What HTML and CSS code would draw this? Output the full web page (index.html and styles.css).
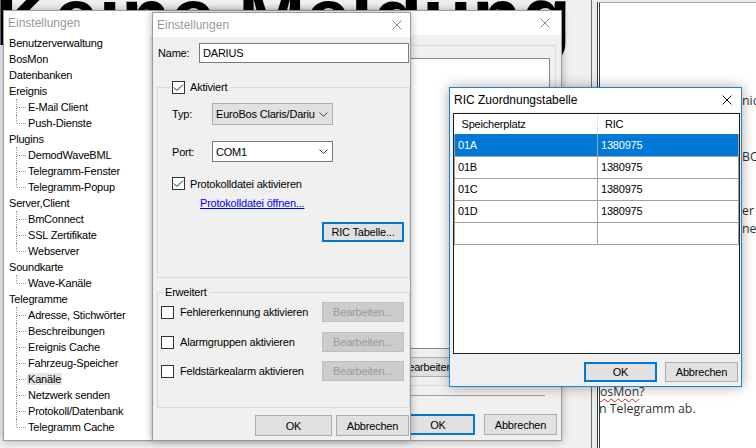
FILE: index.html
```html
<!DOCTYPE html>
<html lang="de">
<head>
    <meta charset="UTF-8">
    <title>Einstellungen</title>
    <link rel="stylesheet" href="styles.css">
</head>
<body>
<div class="desktop">
    <div class="banner">Keine Meldung</div>

    <div class="browser">
        <div class="page">
            <p class="line line-first edge">nicht</p>
            <p class="line line-bos edge">BOS</p>
            <p class="line line-er edge">er</p>
            <p class="line edge">neu</p>
            <p class="line line-bosmon"><span class="typo">BosMon</span>?</p>
            <p class="line line-tele">in Telegramm ab.</p>
        </div>
    </div>

    <!-- main settings window (behind) -->
    <div class="win win-back">
        <div class="titlebar">
            <span class="title">Einstellungen</span>
            <svg class="close" width="10" height="10" viewBox="0 0 10 10"><path d="M0.5 0.5L9.5 9.5M9.5 0.5L0.5 9.5" stroke="currentColor" stroke-width="1"/></svg>
        </div>
        <div class="back-body">
            <ul class="tree">
                <li><div class="label">Benutzerverwaltung</div></li>
                <li><div class="label">BosMon</div></li>
                <li><div class="label">Datenbanken</div></li>
                <li><div class="label">Ereignis</div>
                    <ul class="sub">
                        <li>E-Mail Client</li>
                        <li>Push-Dienste</li>
                    </ul>
                </li>
                <li><div class="label">Plugins</div>
                    <ul class="sub">
                        <li>DemodWaveBML</li>
                        <li>Telegramm-Fenster</li>
                        <li>Telegramm-Popup</li>
                    </ul>
                </li>
                <li><div class="label">Server,Client</div>
                    <ul class="sub">
                        <li>BmConnect</li>
                        <li>SSL Zertifikate</li>
                        <li>Webserver</li>
                    </ul>
                </li>
                <li><div class="label">Soundkarte</div>
                    <ul class="sub">
                        <li>Wave-Kanäle</li>
                    </ul>
                </li>
                <li><div class="label">Telegramme</div>
                    <ul class="sub">
                        <li>Adresse, Stichwörter</li>
                        <li>Beschreibungen</li>
                        <li>Ereignis Cache</li>
                        <li>Fahrzeug-Speicher</li>
                        <li><span class="sel">Kanäle</span></li>
                        <li>Netzwerk senden</li>
                        <li>Protokoll/Datenbank</li>
                        <li>Telegramm Cache</li>
                    </ul>
                </li>
            </ul>
            <div class="back-pane">
                <div class="back-group">
                    <div class="back-list"></div>
                    <button class="btn back-edit">Bearbeiten...</button>
                </div>
                <div class="back-sep"></div>
                <div class="back-buttons">
                    <button class="btn btn-default back-ok">OK</button>
                    <button class="btn back-cancel">Abbrechen</button>
                </div>
            </div>
        </div>
    </div>

    <!-- channel settings dialog -->
    <div class="win win-front">
        <div class="titlebar">
            <span class="title">Einstellungen</span>
            <svg class="close" width="10" height="10" viewBox="0 0 10 10"><path d="M0.5 0.5L9.5 9.5M9.5 0.5L0.5 9.5" stroke="currentColor" stroke-width="1"/></svg>
        </div>
        <div class="dlg-body">
            <div class="name-row">
                <span class="lbl-name">Name:</span>
                <div class="textbox">DARIUS</div>
            </div>

            <fieldset class="group group-main">
                <legend class="legend">
                    <span class="cb"><svg width="11" height="11" viewBox="0 0 11 11"><path d="M1 5.5L4 8.5L10 2.5" fill="none" stroke="#222" stroke-width="1"/></svg></span>Aktiviert
                </legend>
                <div class="field-row">
                    <span class="lbl">Typ:</span>
                    <div class="combo combo-list">EuroBos Claris/Dariu
                        <svg width="9" height="5" viewBox="0 0 9 5"><path d="M0.5 0.5L4.5 4.5L8.5 0.5" fill="none" stroke="#444"/></svg>
                    </div>
                </div>
                <div class="field-row row-port">
                    <span class="lbl">Port:</span>
                    <div class="combo combo-edit">COM1
                        <svg width="9" height="5" viewBox="0 0 9 5"><path d="M0.5 0.5L4.5 4.5L8.5 0.5" fill="none" stroke="#444"/></svg>
                    </div>
                </div>
                <div class="check-row">
                    <span class="cb"><svg width="11" height="11" viewBox="0 0 11 11"><path d="M1 5.5L4 8.5L10 2.5" fill="none" stroke="#222" stroke-width="1"/></svg></span>Protokolldatei aktivieren
                </div>
                <a class="link" href="#">Protokolldatei öffnen...</a>
                <div class="group-actions">
                    <button class="btn btn-default btn-ric">RIC Tabelle...</button>
                </div>
            </fieldset>

            <fieldset class="group group-ext">
                <legend class="legend legend-text">Erweitert</legend>
                <div class="opt-row">
                    <span class="cb"></span>
                    <span class="opt-label">Fehlererkennung aktivieren</span>
                    <button class="btn btn-off" disabled>Bearbeiten...</button>
                </div>
                <div class="opt-row">
                    <span class="cb"></span>
                    <span class="opt-label">Alarmgruppen aktivieren</span>
                    <button class="btn btn-off" disabled>Bearbeiten...</button>
                </div>
                <div class="opt-row">
                    <span class="cb"></span>
                    <span class="opt-label">Feldstärkealarm aktivieren</span>
                    <button class="btn btn-off" disabled>Bearbeiten...</button>
                </div>
            </fieldset>

            <div class="dlg-footer">
                <button class="btn btn-ok">OK</button>
                <button class="btn btn-cancel">Abbrechen</button>
            </div>
        </div>
    </div>

    <!-- RIC table dialog (active) -->
    <div class="win win-ric">
        <div class="titlebar">
            <span class="title">RIC Zuordnungstabelle</span>
            <svg class="close" width="10" height="10" viewBox="0 0 10 10"><path d="M0.5 0.5L9.5 9.5M9.5 0.5L0.5 9.5" stroke="currentColor" stroke-width="1"/></svg>
        </div>
        <div class="ric-body">
            <div class="grid">
                <table>
                    <colgroup><col class="col-a"><col class="col-b"></colgroup>
                    <thead>
                        <tr><th>Speicherplatz</th><th>RIC</th></tr>
                    </thead>
                    <tbody>
                        <tr class="selected"><td>01A</td><td>1380975</td></tr>
                        <tr><td>01B</td><td>1380975</td></tr>
                        <tr><td>01C</td><td>1380975</td></tr>
                        <tr><td>01D</td><td>1380975</td></tr>
                        <tr><td></td><td></td></tr>
                    </tbody>
                </table>
            </div>
            <div class="ric-footer">
                <button class="btn btn-default">OK</button>
                <button class="btn">Abbrechen</button>
            </div>
        </div>
    </div>
</div>
</body>
</html>
```

FILE: styles.css
```css
* {
    box-sizing: border-box;
}
body {
    margin: 0;
    width: 756px;
    height: 448px;
    overflow: hidden;
    background: #f0f0f0;
    font-family: "Liberation Sans", Arial, sans-serif;
    font-size: 11px;
    letter-spacing: -0.2px;
    color: #000;
}
.desktop {
    position: relative;
    width: 756px;
    height: 448px;
    overflow: hidden;
}

/* big status text of the app behind */
.banner {
    position: absolute;
    left: -5px;
    top: -23px;
    font-size: 81px;
    font-weight: bold;
    line-height: 1;
    letter-spacing: 0;
    white-space: nowrap;
}

/* browser on the right */
.browser {
    position: absolute;
    left: 591px;
    top: 0;
    width: 165px;
    height: 448px;
    border-left: 1px solid #6e6e6e;
    background: #e8ecf1;
    padding-left: 5px;
}
.page {
    height: 100%;
    margin-top: 2px;
    background: #fff;
    border-left: 3px double #3a3a3a;
    border-top: 1px solid #a8a8a8;
    overflow: hidden;
    font-family: "Open Sans", sans-serif;
    font-size: 12.3px;
    letter-spacing: 0;
    color: #333;
    white-space: nowrap;
}
.page .line {
    margin: 0;
    line-height: 18px;
}
.page .edge {
    padding-left: 142px;
}
.page .line-first {
    margin-top: 89px;
}
.page .line-bos {
    margin-top: 38px;
}
.page .line-er {
    margin-top: 36px;
}
.page .line-bosmon {
    margin: 145px 0 0 -8px;
    line-height: 17px;
}
.page .line-tele {
    margin-left: -4px;
    line-height: 17px;
}
.typo {
    text-decoration: underline wavy #e02020;
    text-decoration-thickness: 1px;
    text-underline-offset: 2px;
}

/* windows */
.win {
    position: absolute;
    display: flex;
    flex-direction: column;
    background: #f0f0f0;
    border: 1px solid #9a9a9a;
    box-shadow: 0 0 8px rgba(0, 0, 0, 0.3);
}
.titlebar {
    height: 24px;
    flex-shrink: 0;
    display: flex;
    align-items: center;
    justify-content: space-between;
    background: #fff;
    padding: 0 8px 0 4px;
    font-size: 12px;
    letter-spacing: 0;
    color: #999;
}
.close {
    display: block;
    color: #8a8a8a;
}

.win-back {
    left: 3px;
    top: 10px;
    width: 559px;
    height: 431px;
}
.win-back .titlebar {
    padding-right: 11px;
}
.back-body {
    flex: 1;
    display: flex;
}

/* tree */
.tree, .tree ul {
    list-style: none;
    margin: 0;
    padding: 0;
}
.tree {
    width: 146px;
    background: #fff;
    line-height: 16px;
}
.tree .label {
    padding-left: 5px;
    height: 16px;
}
.tree .sub li {
    position: relative;
    height: 16px;
    padding-left: 24px;
}
.tree .sub li::before {
    content: "";
    position: absolute;
    left: 12px;
    top: 0;
    bottom: 0;
    border-left: 1px dotted #9a9a9a;
}
.tree .sub li:last-child::before {
    bottom: 8px;
}
.tree .sub li::after {
    content: "";
    position: absolute;
    left: 13px;
    top: 8px;
    width: 9px;
    border-top: 1px dotted #9a9a9a;
}
.sel {
    background: #e5e5e5;
    padding: 0 1px;
    margin-left: -1px;
}

.back-pane {
    flex: 1;
    display: flex;
    flex-direction: column;
    padding: 10px 5px 0 6px;
}
.back-group {
    height: 341px;
    border: 1px solid #dcdcdc;
    padding: 12px 5px 0 0;
    display: flex;
    flex-direction: column;
    align-items: flex-end;
}
.back-list {
    width: 390px;
    height: 291px;
    background: #fff;
    border: 1px solid #828790;
}
.back-edit {
    width: 90px;
    height: 20px;
    margin: 8px 74px 0 0;
}
.back-sep {
    margin: 9px 11px 0 0;
    border-top: 1px solid #a0a0a0;
}
.back-buttons {
    display: flex;
    justify-content: flex-end;
    gap: 9px;
    margin: 18px -1px 0 0;
}
.back-ok {
    width: 74px;
    height: 21px;
}
.back-cancel {
    width: 73px;
    height: 21px;
}

/* buttons */
.btn {
    font-family: inherit;
    font-size: 11px;
    letter-spacing: -0.2px;
    color: #000;
    background: #e1e1e1;
    border: 1px solid #adadad;
    padding: 0;
    border-radius: 0;
}
.btn-default {
    border: 2px solid #0078d7;
}
.btn-off {
    background: #cccccc;
    border-color: #bfbfbf;
    color: #9a9a9a;
}

/* front dialog */
.win-front {
    left: 152px;
    top: 12px;
    width: 259px;
    height: 429px;
}
.dlg-body {
    flex: 1;
    padding: 6px 0 0 4px;
}
.name-row {
    display: flex;
    align-items: center;
    height: 20px;
}
.lbl-name {
    width: 42px;
    padding-left: 1px;
}
.textbox {
    width: 210px;
    height: 20px;
    background: #fff;
    border: 1px solid #7a7a7a;
    padding-left: 3px;
    line-height: 18px;
}

.group {
    margin: 0;
    min-width: 0;
    border: 1px solid #dcdcdc;
}
.legend {
    display: flex;
    align-items: center;
    height: 14px;
    padding: 0 3px 0 2px;
    margin-left: -2px;
}
.legend-text {
    margin-left: 2px;
}
.cb {
    width: 13px;
    height: 13px;
    flex-shrink: 0;
    border: 1px solid #333;
    background: #fff;
    display: flex;
    align-items: center;
    justify-content: center;
}
.cb svg {
    display: block;
}
.legend .cb, .check-row .cb {
    margin-right: 5px;
}

.group-main {
    margin-top: 17px;
    padding: 0 0 35px 14px;
}
.field-row {
    display: flex;
    align-items: center;
    margin-top: 9px;
}
.row-port {
    margin-top: 16px;
}
.lbl {
    width: 40px;
}
.combo {
    width: 121px;
    display: flex;
    align-items: center;
    justify-content: space-between;
    padding: 0 4px 0 3px;
}
.combo svg {
    display: block;
}
.combo-list {
    height: 22px;
    background: #e1e1e1;
    border: 1px solid #adadad;
}
.combo-edit {
    height: 21px;
    background: #fff;
    border: 1px solid #7a7a7a;
}
.check-row {
    display: flex;
    align-items: center;
    height: 13px;
    margin-top: 15px;
}
.link {
    display: inline-block;
    margin: 6px 0 0 28px;
    line-height: 14px;
    color: #0000ff;
    text-decoration: underline;
}
.group-actions {
    display: flex;
    justify-content: flex-end;
    margin-top: 12px;
    padding-right: 5px;
}
.btn-ric {
    width: 82px;
    height: 20px;
}

.group-ext {
    margin-top: 7px;
    padding: 3px 0 26px 3px;
}
.opt-row {
    display: flex;
    align-items: center;
    height: 20px;
}
.opt-row + .opt-row {
    margin-top: 10px;
}
.opt-row:last-child {
    margin-top: 9px;
}
.opt-label {
    flex: 1;
    margin-left: 6px;
}
.opt-row .btn-off {
    width: 82px;
    height: 20px;
    margin-right: 5px;
}
.dlg-footer {
    display: flex;
    justify-content: flex-end;
    gap: 4px;
    margin-top: 7px;
    padding-right: 1px;
}
.btn-ok {
    width: 77px;
    height: 21px;
}
.btn-cancel {
    width: 73px;
    height: 21px;
}

/* RIC dialog */
.win-ric {
    left: 449px;
    top: 87px;
    width: 293px;
    height: 300px;
    border-color: #1883d7;
    box-shadow: 0 0 12px rgba(0, 0, 0, 0.35);
}
.win-ric .titlebar {
    color: #000;
    padding-right: 9px;
}
.win-ric .close {
    color: #000;
}
.ric-body {
    flex: 1;
    padding: 1px 0 0 3px;
}
.grid {
    width: 287px;
    height: 241px;
    background: #fff;
    border: 1px solid #1e1e1e;
}
.grid table {
    width: 285px;
    border-collapse: collapse;
    table-layout: fixed;
}
.col-a {
    width: 143px;
}
.grid th {
    height: 20px;
    padding: 0 0 0 7px;
    text-align: left;
    font-weight: normal;
}
.grid th:first-child {
    border-right: 1px solid #e5e5e5;
}
.grid td {
    height: 22px;
    padding: 0 0 0 3px;
    border: 1px solid #a0a0a0;
    border-top: none;
}
.grid tr.selected td {
    background: #0078d7;
    color: #fff;
}
.ric-footer {
    display: flex;
    justify-content: flex-end;
    gap: 8px;
    margin-top: 8px;
    padding-right: 3px;
}
.ric-footer .btn {
    width: 73px;
    height: 20px;
}
```
